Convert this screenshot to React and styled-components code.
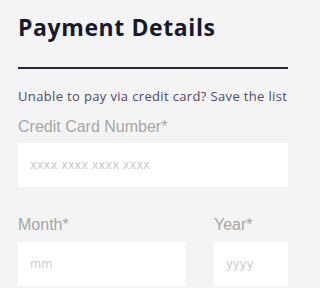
import React from "react";
import styled, { createGlobalStyle } from "styled-components";

const GlobalStyle = createGlobalStyle`
  html, body {
    margin: 0;
    padding: 0;
    background: #f4f4f4;
    overflow: hidden;
  }
  body {
    font-family: "Open Sans", "Noto Sans", sans-serif;
  }
`;

// the frame is a crop of a wider form, so the page clips at 288px
const Page = styled.div`
  width: 288px;
  height: 288px;
  box-sizing: border-box;
  padding: 13px 0 0 18px;
  overflow: hidden;
`;

const Title = styled.h1`
  margin: 0;
  font-family: "Open Sans", sans-serif;
  font-weight: 700;
  font-size: 23px;
  line-height: 28px;
  letter-spacing: 0.6px;
  color: #141a2e;
  white-space: nowrap;
`;

const Rule = styled.hr`
  margin: 26px 0 0 0;
  border: 0;
  height: 2px;
  background: #23263a;
`;

const Note = styled.p`
  margin: 19px 0 0 0;
  font-family: "Open Sans", sans-serif;
  font-size: 13px;
  line-height: 16px;
  letter-spacing: 0.35px;
  color: #514a66;
  white-space: nowrap;
`;

const Label = styled.label`
  display: block;
  margin: ${(p) => p.$top || 0}px 0 ${(p) => p.$gap || 7}px 0;
  font-family: "Liberation Sans", Arial, sans-serif;
  font-size: 16px;
  line-height: 18px;
  color: #a6a6a6;
  white-space: nowrap;
`;

const Input = styled.input`
  display: block;
  box-sizing: border-box;
  width: ${(p) => p.$width || 167}px;
  height: 44px;
  border: 0;
  outline: none;
  padding: 0 12px;
  background: #ffffff;
  font-family: "DejaVu Sans", sans-serif;
  font-size: 11.5px;
  color: #333;
  &::placeholder {
    color: #cbcbcb;
  }
`;

const Row = styled.div`
  display: flex;
  gap: 29px;
  margin-top: 29px;
`;

const Field = styled.div`
  flex: none;
`;

export default function App() {
  return (
    <>
      <GlobalStyle />
      <Page>
        <Title>Payment Details</Title>
        <Rule />
        <Note>Unable to pay via credit card? Save the listing and pay later.</Note>
        <Label $top={14}>Credit Card Number*</Label>
        <Input $width={363} placeholder="xxxx xxxx xxxx xxxx" />
        <Row>
          <Field>
            <Label $gap={8}>Month*</Label>
            <Input placeholder="mm" />
          </Field>
          <Field>
            <Label $gap={8}>Year*</Label>
            <Input placeholder="yyyy" />
          </Field>
        </Row>
      </Page>
    </>
  );
}
